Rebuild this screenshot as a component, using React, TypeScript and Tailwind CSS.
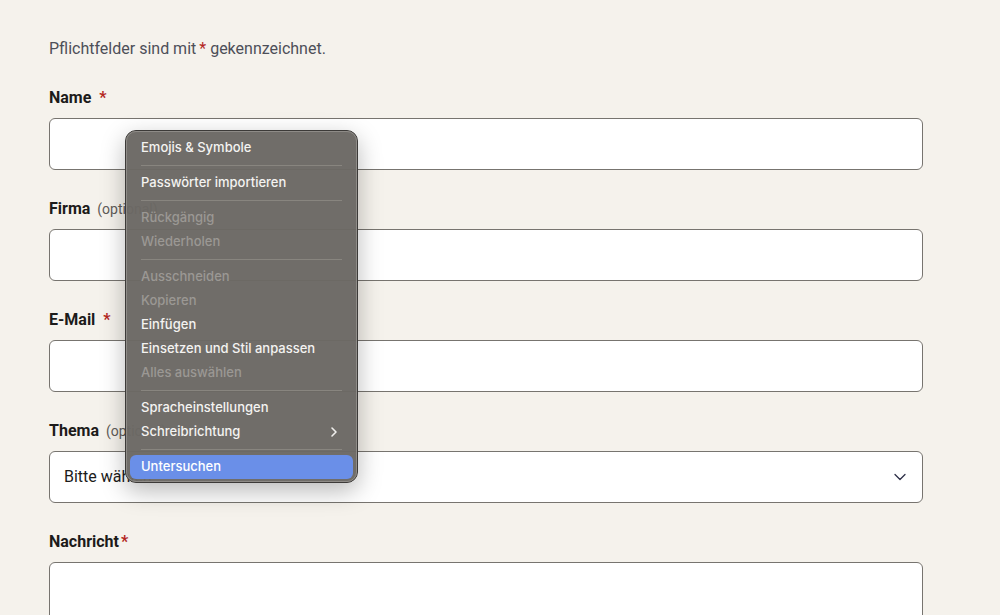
import React from "react";

type MenuEntry =
  | { kind: "item"; label: string; disabled?: boolean; submenu?: boolean; active?: boolean }
  | { kind: "sep" };

const menu: MenuEntry[] = [
  { kind: "item", label: "Emojis & Symbole" },
  { kind: "sep" },
  { kind: "item", label: "Passwörter importieren" },
  { kind: "sep" },
  { kind: "item", label: "Rückgängig", disabled: true },
  { kind: "item", label: "Wiederholen", disabled: true },
  { kind: "sep" },
  { kind: "item", label: "Ausschneiden", disabled: true },
  { kind: "item", label: "Kopieren", disabled: true },
  { kind: "item", label: "Einfügen" },
  { kind: "item", label: "Einsetzen und Stil anpassen" },
  { kind: "item", label: "Alles auswählen", disabled: true },
  { kind: "sep" },
  { kind: "item", label: "Spracheinstellungen" },
  { kind: "item", label: "Schreibrichtung", submenu: true },
  { kind: "sep" },
  { kind: "item", label: "Untersuchen", active: true },
];

function Star({ spaced = true }: { spaced?: boolean }) {
  return <span className={`text-[#b3261e] ${spaced ? "ml-[8px]" : "ml-[2px]"}`}>*</span>;
}

function Label({ text, required, optional, spaced = true }: { text: string; required?: boolean; optional?: boolean; spaced?: boolean }) {
  return (
    <label className="flex items-baseline h-[24px] pt-[2px] leading-[22px] text-[16px] font-bold text-[#1c1b1a] mb-[9px]">
      {text}
      {required && <Star spaced={spaced} />}
      {optional && <span className="ml-[7px] text-[14px] font-normal text-[#5f5c58]">(optional)</span>}
    </label>
  );
}

function Field({ children }: { children: React.ReactNode }) {
  return <div className="flex flex-col mb-[26px]">{children}</div>;
}

const inputCls =
  "w-full h-[52px] bg-white border border-[#77746f] rounded-[6px] px-[15px] text-[16px] text-[#1c1b1a] outline-none";

function ContextMenu() {
  return (
    <div
      className="absolute left-[125px] top-[130px] w-[233px] rounded-[11px] bg-[#6b6864]/[0.97] border border-[#3c3a38] shadow-[0_8px_24px_rgba(0,0,0,0.28)] pt-[5px] pb-[3px] px-[4px]"
      style={{ fontFamily: "Inter, 'Noto Sans', sans-serif" }}
    >
      <div className="absolute inset-0 rounded-[10px] border border-[#8e8b87] pointer-events-none" />
      {menu.map((e, i) =>
        e.kind === "sep" ? (
          <div key={i} className="h-[11px] flex items-center px-[11px]">
            <div className="h-px w-full bg-[#88857f]" />
          </div>
        ) : (
          <div
            key={i}
            className={`relative h-[24px] flex items-center justify-between px-[11px] rounded-[6px] text-[13px] font-medium ${
              e.active ? "bg-[#6a8fe8] text-white" : e.disabled ? "text-[#9b9894]" : "text-[#f4f3f1]"
            }`}
          >
            <span>{e.label}</span>
            {e.submenu && (
              <svg width="8" height="12" viewBox="0 0 8 12" className="mr-[4px]">
                <path d="M2 2l4 4-4 4" fill="none" stroke="#f0efed" strokeWidth="1.6" strokeLinecap="round" strokeLinejoin="round" />
              </svg>
            )}
          </div>
        )
      )}
    </div>
  );
}

export default function App() {
  return (
    <div
      className="relative w-[1000px] h-[615px] overflow-hidden bg-[#f5f2ec]"
      style={{ fontFamily: "Roboto, 'Noto Sans', sans-serif" }}
    >
      <div className="w-[874px] ml-[49px] pt-[36px] flex flex-col">
        <p className="h-[24px] pt-[2px] leading-[22px] text-[16px] text-[#4d4f58] mb-[25px]">
          Pflichtfelder sind mit<span className="text-[#b3261e] ml-[3px]">*</span> gekennzeichnet.
        </p>

        <Field>
          <Label text="Name" required />
          <input className={inputCls} />
        </Field>

        <Field>
          <Label text="Firma" optional />
          <input className={inputCls} />
        </Field>

        <Field>
          <Label text="E-Mail" required />
          <input className={inputCls} />
        </Field>

        <Field>
          <Label text="Thema" optional />
          <div className={`${inputCls} flex items-center justify-between pl-[14px]`}>
            <span>Bitte wählen</span>
            <svg width="12" height="8" viewBox="0 0 12 8" className="mr-[1px]">
              <path d="M1 1.5l5 5 5-5" fill="none" stroke="#2e3048" strokeWidth="1.3" strokeLinecap="round" strokeLinejoin="round" />
            </svg>
          </div>
        </Field>

        <Field>
          <Label text="Nachricht" required spaced={false} />
          <textarea className="w-full h-[120px] bg-white border border-[#77746f] rounded-[6px] px-[15px] py-[12px] outline-none resize-none" />
        </Field>
      </div>

      <ContextMenu />
    </div>
  );
}
